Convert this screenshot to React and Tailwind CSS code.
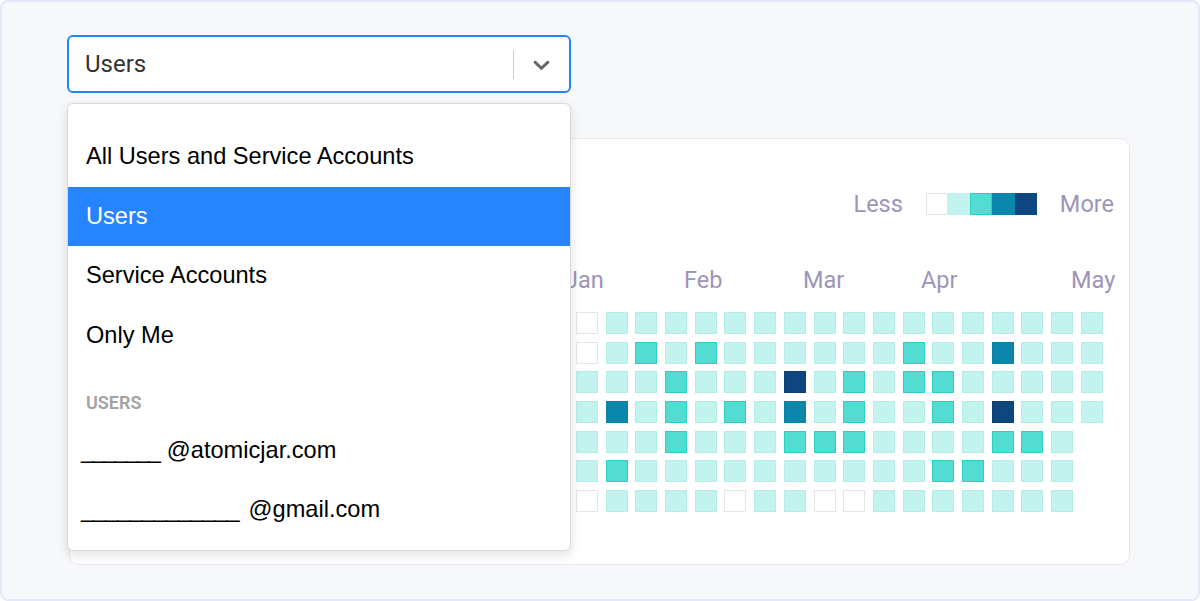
import React from 'react';

// heat levels: 0 empty, 1 light, 2 teal, 3 blue, 4 navy
const levelClass = {
  0: 'bg-white border border-[#e6e6e9]',
  1: 'bg-[#c3f3ee] border border-[#b4ece6]',
  2: 'bg-[#52dcd2] border border-[#2ecfc2]',
  3: 'bg-[#0b87ad] border border-[#0a80a3]',
  4: 'bg-[#0e4680] border border-[#0c3f76]',
};

const rows = [
  [0, 1, 1, 1, 1, 1, 1, 1, 1, 1, 1, 1, 1, 1, 1, 1, 1, 1],
  [0, 1, 2, 1, 2, 1, 1, 1, 1, 1, 1, 2, 1, 1, 3, 1, 1, 1],
  [1, 1, 1, 2, 1, 1, 1, 4, 1, 2, 1, 2, 2, 1, 1, 1, 1, 1],
  [1, 3, 1, 2, 1, 2, 1, 3, 1, 2, 1, 1, 2, 1, 4, 1, 1, 1],
  [1, 1, 1, 2, 1, 1, 1, 2, 2, 2, 1, 1, 1, 1, 2, 2, 1],
  [1, 2, 1, 1, 1, 1, 1, 1, 1, 1, 1, 1, 2, 2, 1, 1, 1],
  [0, 1, 1, 1, 1, 0, 1, 1, 0, 0, 1, 1, 1, 1, 1, 1, 1],
];

const menuFont = { fontFamily: '"Liberation Sans", Arial, sans-serif' };

const Chevron = () => (
  <svg width="27" height="27" viewBox="0 0 20 20" className="fill-[#666]">
    <path d="M4.516 7.548c0.436-0.446 1.043-0.481 1.576 0l3.908 3.747 3.908-3.747c0.533-0.481 1.141-0.446 1.574 0 0.436 0.445 0.408 1.197 0 1.615-0.406 0.418-4.695 4.502-4.695 4.502-0.217 0.223-0.502 0.335-0.787 0.335s-0.57-0.112-0.789-0.335c0 0-4.287-4.084-4.695-4.502s-0.436-1.17 0-1.615z" />
  </svg>
);

const Legend = () => (
  <div className="flex justify-end items-center pr-[15px] h-[22px] text-[23.5px] text-[#9c95b9]">
    <span className="mr-[23px] translate-y-[1px]">Less</span>
    <div className="flex">
      <div className="w-[22px] h-[22px] bg-white border border-[#e6e6e9]" />
      <div className="w-[22px] h-[22px] bg-[#c3f3ee]" />
      <div className="w-[22px] h-[22px] bg-[#52dcd2] border border-[#2ecfc2]" />
      <div className="w-[23px] h-[22px] bg-[#0b87ad]" />
      <div className="w-[22px] h-[22px] bg-[#0e4680]" />
    </div>
    <span className="ml-[23px] translate-y-[1px]">More</span>
  </div>
);

const Heatmap = () => (
  <div className="flex flex-col gap-[7.7px] pl-[506px]">
    {rows.map((row, r) => (
      <div key={r} className="flex gap-[7.7px]">
        {row.map((lvl, c) => (
          <div key={c} className={`w-[22px] h-[22px] ${levelClass[lvl]}`} />
        ))}
      </div>
    ))}
  </div>
);

export default function App() {
  return (
    <div
      className="w-[1200px] h-[601px] bg-[#f7f8fc] border-2 border-[#e4e8f8] rounded-lg relative pl-[65px] pt-[33px]"
      style={{ fontFamily: 'Roboto, "Liberation Sans", sans-serif' }}
    >
      {/* select control */}
      <div className="w-[504px] h-[58px] bg-white border-2 border-[#2684ff] rounded-md flex items-center">
        <span className="flex-1 pl-[16px] text-[24px] text-[#333]">Users</span>
        <div className="w-px h-[29px] bg-[#ccc]" />
        <div className="w-[55px] flex justify-center">
          <Chevron />
        </div>
      </div>

      {/* chart card */}
      <div className="ml-[2px] mt-[45px] w-[1061px] h-[427px] bg-white border border-[#e7e8ee] rounded-[10px] pt-[54px]">
        <Legend />
        <div className="flex pl-[495px] mt-[52px] h-[28px] items-center text-[23.5px] text-[#9c95b9]">
          <span className="w-[119px]">Jan</span>
          <span className="w-[119px]">Feb</span>
          <span className="w-[118px]">Mar</span>
          <span className="w-[150px]">Apr</span>
          <span>May</span>
        </div>
        <div className="mt-[17px]">
          <Heatmap />
        </div>
      </div>

      {/* open menu */}
      <div
        className="absolute left-[65px] top-[101px] w-[504px] h-[448px] bg-white rounded-md border border-[#d9d9d9] shadow-[0_4px_11px_rgba(0,0,0,0.12)] pt-[23px] z-10 text-[23.6px] text-black"
        style={menuFont}
      >
        <div className="h-[59.5px] flex items-center px-[18px]">All Users and Service Accounts</div>
        <div className="h-[59.5px] flex items-center px-[18px] bg-[#2684ff] text-white">Users</div>
        <div className="h-[59.5px] flex items-center px-[18px]">Service Accounts</div>
        <div className="h-[59.5px] flex items-center px-[18px]">Only Me</div>
        <div
          className="h-[55.5px] flex items-end pb-[9px] px-[18px] text-[18px] leading-[18px] font-semibold text-[#a3a3a3] uppercase"
          style={{ fontFamily: 'Roboto, sans-serif' }}
        >
          Users
        </div>
        <div className="h-[59.5px] flex items-center pl-[13px]">
          <span className="tracking-[-2px]">_______</span>
          <span className="ml-[8px]">@atomicjar.com</span>
        </div>
        <div className="h-[59.5px] flex items-center pl-[13px]">
          <span className="tracking-[-1px]">_____________</span>
          <span className="ml-[10px]">@gmail.com</span>
        </div>
      </div>
    </div>
  );
}
